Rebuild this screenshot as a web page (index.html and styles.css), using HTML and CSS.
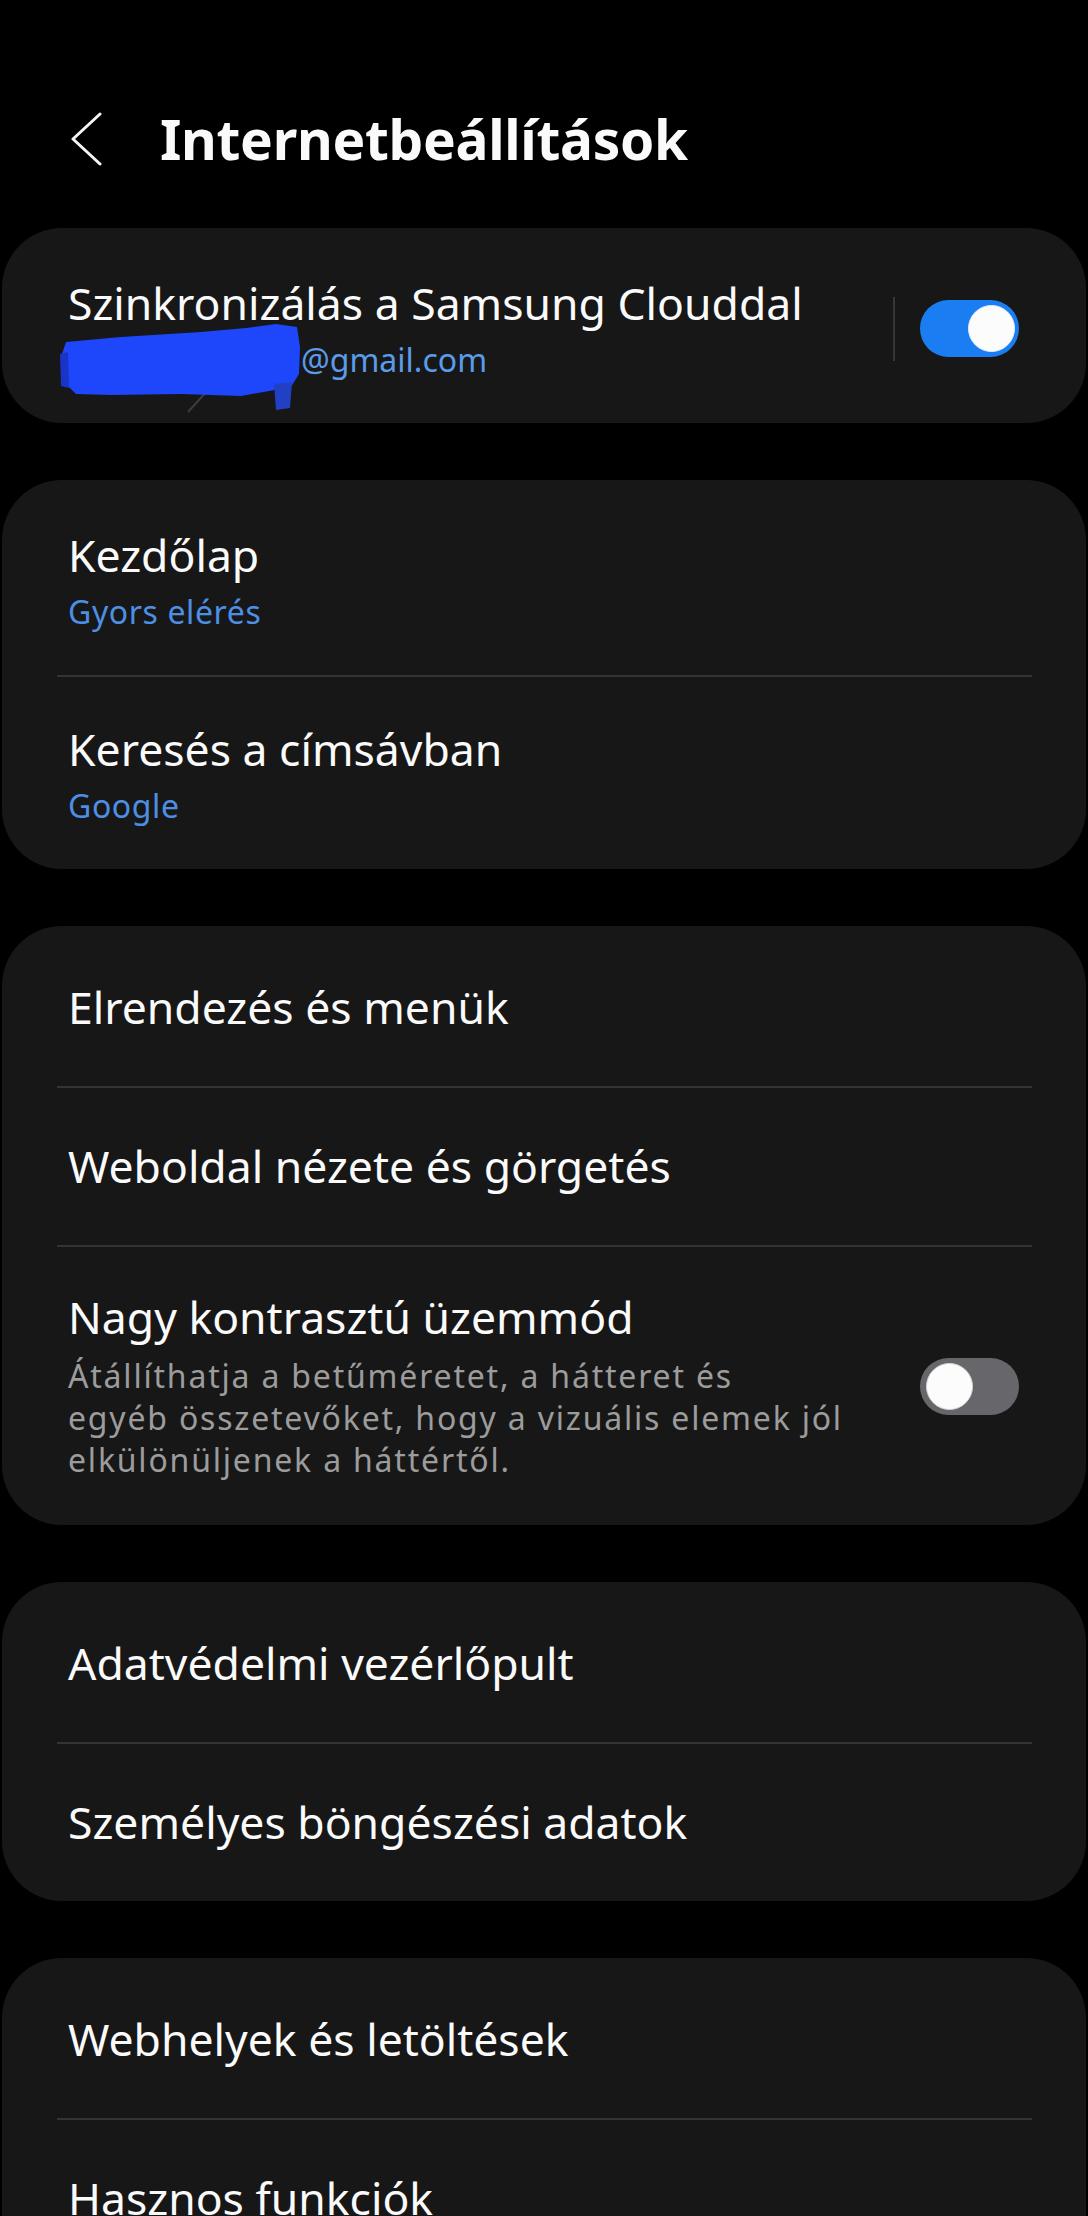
FILE: index.html
```html
<!DOCTYPE html>
<html lang="hu">
<head>
  <meta charset="UTF-8" />
  <meta name="viewport" content="width=device-width, initial-scale=1.0" />
  <title>Internetbeállítások</title>
  <link rel="stylesheet" href="styles.css">
</head>
<body>
  <header class="topbar">
    <button class="back" aria-label="Vissza">
      <svg width="34" height="54" viewBox="0 0 34 54">
        <path d="M30 2 L3 27 L30 52" fill="none" stroke="#f5f5f5" stroke-width="3" stroke-linecap="round" stroke-linejoin="round"/>
      </svg>
    </button>
    <h1>Internetbeállítások</h1>
  </header>

  <main class="groups">
    <section class="card">
      <div class="row">
        <div class="row-text">
          <div class="row-title">Szinkronizálás a Samsung Clouddal</div>
          <div class="row-sub account">
            <span class="hidden-name"></span>@gmail.com
            <svg class="scribble" width="245" height="90" viewBox="0 0 245 90">
              <path d="M46 50 L8 50" stroke="#3a3a3a" stroke-width="2"/>
              <path d="M132 88 L152 66" stroke="#3c3c3c" stroke-width="2"/>
              <path d="M10 18 L65 13 L145 8 L190 4 L220 0 L241 3 L244 23 L243 50 L235 63 L185 72 L125 70 L55 71 L20 70 L8 58 L5 33 Z" fill="#1e46fb"/>
              <path d="M4 30 L12 28 L13 64 L5 62 Z" fill="#1a34c8"/>
              <path d="M218 60 L236 58 L234 84 L220 86 Z" fill="#2140c4"/>
            </svg>
          </div>
        </div>
        <span class="vsep"></span>
        <span class="switch on"></span>
      </div>
    </section>

    <section class="card">
      <div class="row">
        <div class="row-text">
          <div class="row-title">Kezdőlap</div>
          <div class="row-sub">Gyors elérés</div>
        </div>
      </div>
      <div class="row">
        <div class="row-text">
          <div class="row-title">Keresés a címsávban</div>
          <div class="row-sub">Google</div>
        </div>
      </div>
    </section>

    <section class="card">
      <div class="row single">
        <div class="row-title">Elrendezés és menük</div>
      </div>
      <div class="row single">
        <div class="row-title">Weboldal nézete és görgetés</div>
      </div>
      <div class="row desc-row">
        <div class="row-text">
          <div class="row-title">Nagy kontrasztú üzemmód</div>
          <div class="row-desc">Átállíthatja a betűméretet, a hátteret és<br>egyéb összetevőket, hogy a vizuális elemek jól<br>elkülönüljenek a háttértől.</div>
        </div>
        <span class="switch"></span>
      </div>
    </section>

    <section class="card">
      <div class="row single">
        <div class="row-title">Adatvédelmi vezérlőpult</div>
      </div>
      <div class="row single">
        <div class="row-title">Személyes böngészési adatok</div>
      </div>
    </section>

    <section class="card">
      <div class="row single">
        <div class="row-title">Webhelyek és letöltések</div>
      </div>
      <div class="row single">
        <div class="row-title">Hasznos funkciók</div>
      </div>
    </section>
  </main>
</body>
</html>
```

FILE: styles.css
```css
body {
  margin: 0;
  background: #000;
  color: #fafafa;
  font-family: 'Noto Sans', 'DejaVu Sans', sans-serif;
}
.topbar {
  display: flex;
  align-items: center;
  height: 64px;
  padding: 107px 0 57px 70px;
}
.back {
  background: none;
  border: none;
  padding: 0;
  width: 34px;
  height: 54px;
  margin-right: 56px;
}
.back svg {
  display: block;
}
h1 {
  margin: 0;
  font-size: 55px;
  line-height: 64px;
  font-weight: 700;
  letter-spacing: -0.3px;
}
.groups {
  display: flex;
  flex-direction: column;
  gap: 57px;
  padding: 0 2px;
}
.card {
  background: #171717;
  border-radius: 60px;
  padding-top: 3px;
}
.row {
  display: flex;
  align-items: center;
  margin: 0 54px 0 55px;
  padding: 46px 13px 43px 11px;
}
.row + .row {
  border-top: 2px solid #343434;
}
.row.single {
  padding-top: 52px;
  padding-bottom: 53px;
}
.row.desc-row {
  padding-top: 44px;
  padding-bottom: 44px;
}
.row-text {
  flex: 1;
  min-width: 0;
}
.row-title {
  font-size: 44.5px;
  line-height: 52px;
}
.row-sub {
  margin-top: 11px;
  font-size: 32px;
  line-height: 40px;
  letter-spacing: 0.6px;
  color: #4d8fe4;
}
.account {
  position: relative;
  color: #5a9bea;
  letter-spacing: 0;
}
.hidden-name {
  display: inline-block;
  width: 233px;
}
.scribble {
  position: absolute;
  left: -12px;
  top: -16px;
}
.row-desc {
  margin-top: 12px;
  font-size: 32px;
  line-height: 42px;
  letter-spacing: 1.8px;
  color: #9c9c9c;
}
.vsep {
  width: 2px;
  height: 64px;
  background: #363636;
  margin-right: 25px;
}
.switch {
  position: relative;
  flex: none;
  width: 99px;
  height: 57px;
  border-radius: 29px;
  background: #67676b;
}
.switch::after {
  content: "";
  position: absolute;
  top: 5px;
  left: 6px;
  width: 45px;
  height: 45px;
  border-radius: 50%;
  background: #fcfcfc;
  border: 1px solid #d8d8d8;
}
.switch.on {
  background: #1a7ef2;
}
.switch.on::after {
  left: auto;
  right: 4px;
  border-color: #e8f1ff;
}
```
